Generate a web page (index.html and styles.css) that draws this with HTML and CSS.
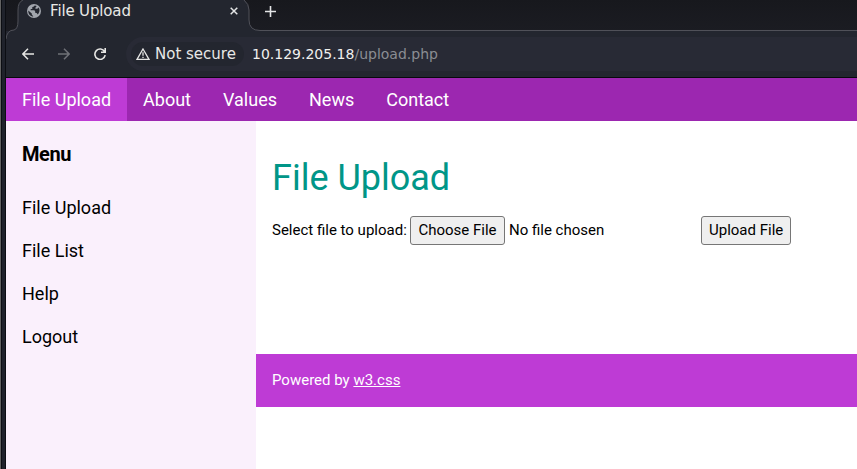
FILE: index.html
```html
<!DOCTYPE html>
<html lang="en">
<head>
<meta charset="utf-8">
<title>File Upload</title>
<link rel="stylesheet" href="styles.css">
</head>
<body>
<div class="frame"></div>
<div class="window">
  <header class="chrome">
    <div class="tabs">
      <svg class="tab-shape" width="857" height="45" viewBox="0 0 857 45">
        <path d="M0 45V39Q1 30 8 30Q12 29 12 21V10Q12 2 17 0H238Q243 4 243 10V20Q243 30.5 254 30.5H857V45Z" fill="#23262f"/>
        <path d="M0 39Q1 30 8 30Q12 29 12 21V10Q12 2 17 0M238 0Q243 4 243 10V20Q243 30.5 254 30.5H857" fill="none" stroke="#505159"/>
      </svg>
      <svg class="globe" width="14" height="14" viewBox="0 0 14 14">
        <circle cx="7" cy="7" r="7" fill="#a2a6ad"/>
        <path d="M7.8 1.4L6.5 2.8L5.3 3.1V5H3.7V6.3H7.4L8.3 7.8V9H9.6L10.8 10.5C13 8 13 5 11.3 3.6L10.4 4.8H8.4V3.7L9.7 2.1ZM1.3 6.4L4.8 9.4V10.6L6.4 12.5C3.3 12.5 1 9.7 1.3 6.4Z" fill="#23262f"/>
      </svg>
      <span class="tab-title">File Upload</span>
      <svg class="close" width="8" height="8" viewBox="0 0 8 8"><path d="M.7.7L7.3 7.3M7.3.7L.7 7.3" stroke="#e4e5e6" stroke-width="1.5"/></svg>
      <svg class="plus" width="11" height="11" viewBox="0 0 11 11"><path d="M5.5 0V11M0 5.5H11" stroke="#e4e5e6" stroke-width="1.6"/></svg>
    </div>
    <div class="toolbar">
      <svg class="back" width="12" height="12" viewBox="0 0 12 12"><path d="M12 6H1.2M6 .8L.9 6L6 11.2" fill="none" stroke="#e6e6e4" stroke-width="1.5"/></svg>
      <svg class="forward" width="12" height="12" viewBox="0 0 12 12"><path d="M0 6H10.8M6 .8L11.1 6L6 11.2" fill="none" stroke="#6f7177" stroke-width="1.5"/></svg>
      <svg class="reload" width="12" height="12" viewBox="0 0 12 12"><path d="M10.6 3.6A5.2 5.2 0 1 0 11.2 7.2M11.2 0V4.3H7" fill="none" stroke="#e6e6e4" stroke-width="1.6"/></svg>
      <div class="address">
        <div class="security">
          <svg width="14" height="12" viewBox="0 0 14 12"><path d="M7 1L13 11.3H1Z" fill="none" stroke="#e6e6e4" stroke-width="1.3"/><path d="M7 4.3V7.7M7 8.7V10" stroke="#e6e6e4" stroke-width="1.3"/></svg>
          <span>Not secure</span>
        </div>
        <div class="url">10.129.205.18<span>/upload.php</span></div>
      </div>
    </div>
  </header>
  <nav class="nav">
    <a class="active">File Upload</a><a>About</a><a>Values</a><a>News</a><a>Contact</a>
  </nav>
  <div class="page">
    <aside class="sidebar">
      <h4>Menu</h4>
      <a>File Upload</a><a>File List</a><a>Help</a><a>Logout</a>
    </aside>
    <main>
      <section class="content">
        <h1>File Upload</h1>
        <form class="form">
          <span class="label">Select file to upload:</span>
          <button type="button" class="choose">Choose File</button>
          <span class="status">No file chosen</span>
          <button type="button" class="submit">Upload File</button>
        </form>
      </section>
      <footer>Powered by <a>w3.css</a></footer>
    </main>
  </div>
</div>
</body>
</html>
```
FILE: styles.css
```css
* { box-sizing: border-box; }
body {
  margin: 0;
  height: 469px;
  display: flex;
  overflow: hidden;
  background: #fff;
  color: #000;
  font: 15px/1.5 Roboto, sans-serif;
}
.frame {
  flex: none;
  width: 6px;
  background: linear-gradient(90deg, #626262 0 1px, #0c0e13 1px 2px, #1f222b 2px 5px, #0c0e13 5px);
}
.window { flex: 1; min-width: 0; display: flex; flex-direction: column; }
.chrome {
  height: 78px;
  background: #23262f;
  border-bottom: 1px solid #08090d;
  color: #e8e8e6;
  font-family: "DejaVu Sans", sans-serif;
  overflow: hidden;
}
.tabs {
  position: relative;
  height: 31px;
  display: flex;
  align-items: flex-start;
  padding-left: 21px;
  background: linear-gradient(#17181d, #1b1c22);
}
.tab-shape { position: absolute; left: 0; top: 0; }
.tabs > :not(.tab-shape) { position: relative; flex: none; }
.globe { margin-top: 4px; }
.tab-title { margin: 1px 0 0 9px; width: 180px; font-size: 15px; line-height: 20px; letter-spacing: -.15px; }
.close { margin-top: 7px; }
.plus { margin: 6px 0 0 27px; }
.toolbar { position: relative; height: 46px; display: flex; align-items: center; padding-left: 16px; }
.forward, .reload { margin-left: 24px; }
.address {
  flex: 1;
  height: 34px;
  margin-left: 20px;
  padding-left: 5px;
  display: flex;
  align-items: center;
  background: #282a35;
  border-radius: 17px 0 0 17px;
}
.security {
  width: 113px;
  height: 24px;
  padding-left: 5px;
  display: flex;
  align-items: center;
  gap: 5px;
  background: #23262f;
  border-radius: 12px;
  font-size: 15px;
  white-space: nowrap;
}
.url { margin-left: 8px; font-size: 14px; color: #f0f0ee; }
.url span { color: #8b8d93; }
.nav { height: 43px; display: flex; background: #9c27b0; color: #fff; font-size: 18px; }
.nav a { padding: 8px 16px; }
.nav .active { background: #be3bd5; }
.page { flex: 1; display: flex; }
.sidebar { width: 250px; background: #faf0fc; font-size: 18px; }
.sidebar h4 { margin: 18px 16px 17px; font-size: 20px; line-height: 30px; letter-spacing: -.4px; }
.sidebar a { display: block; padding: 8px 16px; }
main { flex: 1; }
.content { height: 233px; padding: 30px 16px 0; }
h1 { margin: 0; color: #009688; font-size: 36px; line-height: 54px; font-weight: 400; }
.form { display: flex; align-items: center; margin-top: 11px; height: 29px; white-space: nowrap; }
.label { width: 138px; }
button {
  height: 29px;
  padding: 0 7px;
  color: #000;
  background: #efefef;
  border: 1px solid #767676;
  border-radius: 3px;
  font: inherit;
}
.choose { width: 95px; }
.status { width: 192px; margin-left: 4px; }
.submit { width: 90px; }
footer { height: 53px; padding: 15px 16px; background: #be3bd5; color: #fff; }
footer a { text-decoration: underline; }
```
